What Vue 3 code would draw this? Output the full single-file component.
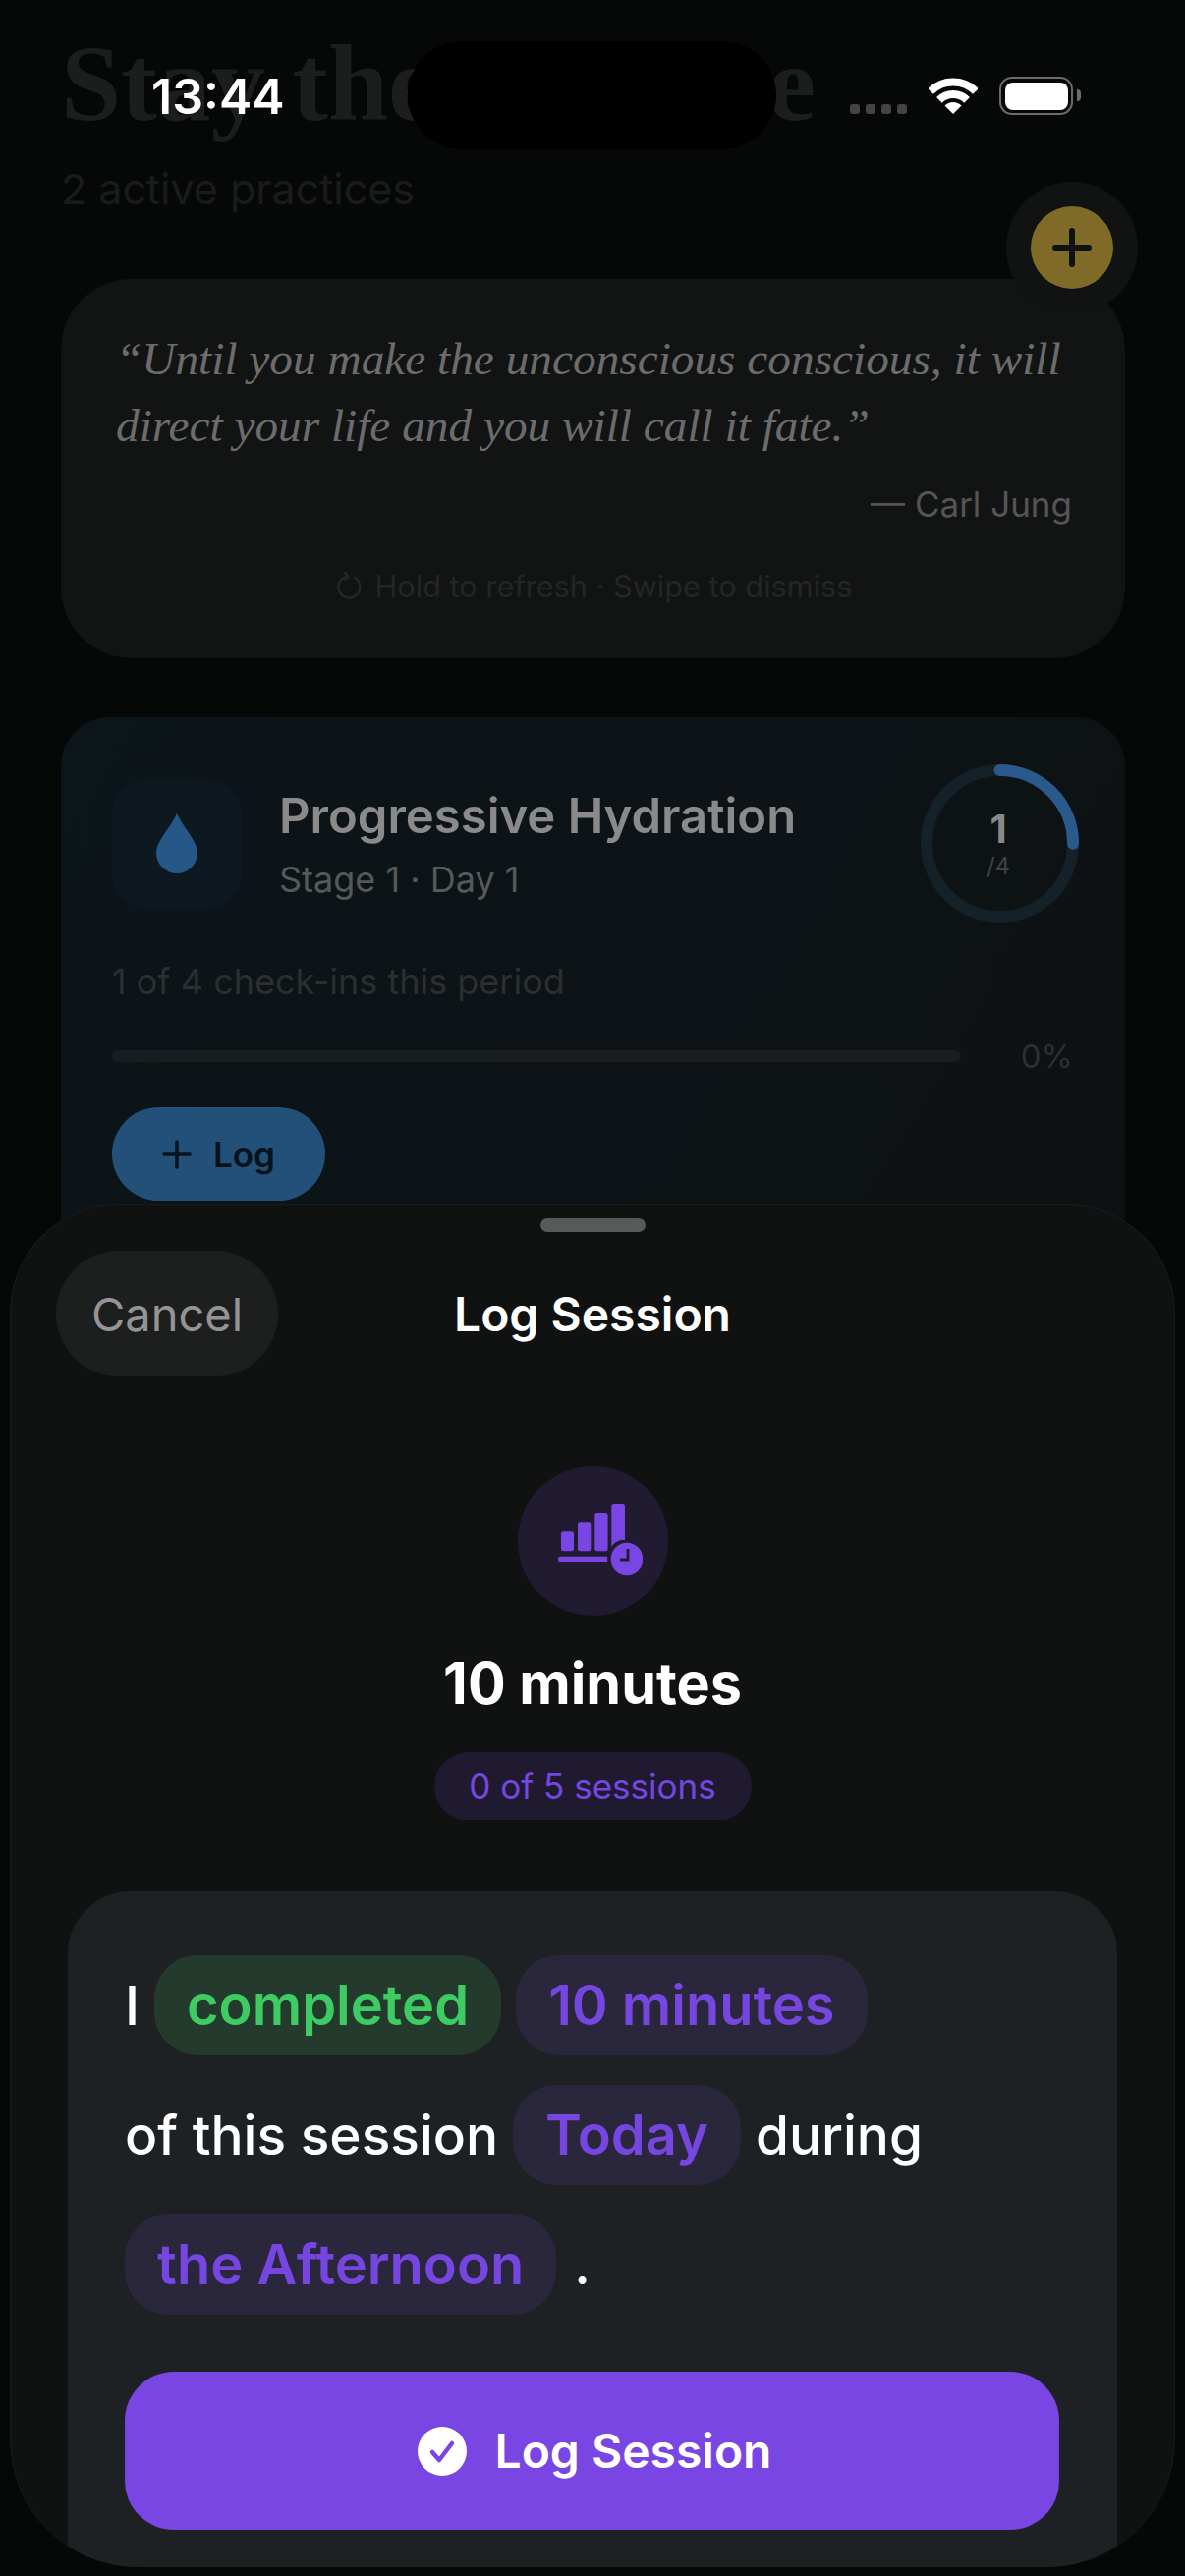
<template>
  <div class="screen">
    <main class="home">
      <h1 class="title">Stay the <span class="title-end">Course</span></h1>
      <p class="subtitle">{{ activeCount }} active practices</p>

      <section class="quote-card">
        <p class="quote">“Until you make the unconscious conscious, it will direct your life and you will call it fate.”</p>
        <p class="author">— Carl Jung</p>
        <p class="hint">
          <svg class="hint-icon" viewBox="0 0 26 30" width="26" height="30" fill="none" stroke="#242626" stroke-width="2.5" stroke-linecap="round">
            <path d="M19 6a11 11 0 1 1-9-1" />
            <path d="M9 1l4 4-4 3" />
          </svg>
          Hold to refresh · Swipe to dismiss
        </p>
      </section>

      <section class="habit-card">
        <div class="habit-head">
          <div class="habit-tile">
            <svg viewBox="0 0 42 61" width="42" height="61"><path d="M21 0C27 14 42 28 42 40A21 21 0 0 1 0 40C0 28 15 14 21 0Z" fill="#255887" /></svg>
          </div>
          <div class="habit-names">
            <div class="habit-name">Progressive Hydration</div>
            <div class="habit-stage">Stage 1 · Day 1</div>
          </div>
          <div class="ring">
            <svg viewBox="0 0 161 161" width="161" height="161">
              <circle cx="80.5" cy="80.5" r="74.5" fill="none" stroke="#152129" stroke-width="12" />
              <circle cx="80.5" cy="80.5" r="74.5" fill="none" stroke="#2a5a8c" stroke-width="12" stroke-linecap="round" stroke-dasharray="117 468" transform="rotate(-90 80.5 80.5)" />
            </svg>
            <div class="ring-text">
              <span class="ring-num">1</span>
              <span class="ring-total">/4</span>
            </div>
          </div>
        </div>
        <p class="checkins">1 of 4 check-ins this period</p>
        <div class="progress-row">
          <div class="progress-track"></div>
          <span class="progress-pct">0%</span>
        </div>
        <button class="log-btn">
          <svg viewBox="0 0 30 30" width="30" height="30"><path d="M15 2v26M2 15h26" stroke="#08131d" stroke-width="3.6" stroke-linecap="round" /></svg>
          Log
        </button>
      </section>
    </main>

    <div class="fab-ring">
      <div class="fab">
        <svg viewBox="0 0 40 40" width="40" height="40"><path d="M20 3v34M3 20h34" stroke="#101210" stroke-width="6" stroke-linecap="round" /></svg>
      </div>
    </div>

    <div class="status">
      <span class="clock">13:44</span>
      <div class="island"></div>
      <div class="status-icons">
        <div class="dots"><i v-for="n in 4" :key="n"></i></div>
        <svg class="wifi" viewBox="0 0 50 37" width="50" height="37" fill="none" stroke="#fff" stroke-width="8">
          <path d="M2 14A32.5 32.5 0 0 1 48 14" />
          <path d="M10.9 22.9A20 20 0 0 1 39.1 22.9" />
          <path d="M25 37L16.5 28.5A12 12 0 0 1 33.5 28.5Z" fill="#fff" stroke="none" />
        </svg>
        <div class="battery"><div class="battery-fill"></div></div>
      </div>
    </div>

    <section class="sheet">
      <div class="handle"></div>
      <header class="sheet-head">
        <button class="cancel">Cancel</button>
        <h2 class="sheet-title">Log Session</h2>
      </header>

      <div class="session">
        <div class="session-icon">
          <svg viewBox="-16 0 102 76" width="102" height="76">
            <g fill="#7946e3">
              <rect x="3" y="27.3" width="13" height="21" rx="2.5" />
              <rect x="20" y="18.3" width="13.3" height="30" rx="2.5" />
              <rect x="37.3" y="9" width="13.3" height="39.3" rx="2.5" />
              <rect x="54.3" y="0" width="13.7" height="48" rx="2.5" />
              <rect x="0" y="53.7" width="52" height="5.3" rx="2.6" />
            </g>
            <circle cx="70" cy="56" r="20" fill="#211b32" />
            <circle cx="70" cy="56" r="16.3" fill="#7946e3" />
            <path d="M71 46V57H63" fill="none" stroke="#211b32" stroke-width="2.8" />
          </svg>
        </div>
        <div class="session-name">10 minutes</div>
        <div class="session-count">0 of 5 sessions</div>
      </div>

      <div class="sentence-card">
        <div class="sentence">
          <div class="sentence-line">
            <span>I</span>
            <span class="chip chip-green">completed</span>
            <span class="chip">10 minutes</span>
          </div>
          <div class="sentence-line">
            <span>of this session</span>
            <span class="chip">Today</span>
            <span>during</span>
          </div>
          <div class="sentence-line">
            <span class="chip">the Afternoon</span>
            <span class="stop">.</span>
          </div>
        </div>
        <button class="submit">
          <svg viewBox="0 0 50 50" width="50" height="50">
            <circle cx="25" cy="25" r="25" fill="#fff" />
            <path d="M15 26l7 8 13-17" fill="none" stroke="#7946e3" stroke-width="4.5" stroke-linecap="round" stroke-linejoin="round" />
          </svg>
          Log Session
        </button>
      </div>
    </section>
  </div>
</template>

<script setup>
const activeCount = 2
</script>

<style scoped>
.screen {
  position: relative;
  width: 1206px;
  height: 2622px;
  overflow: hidden;
  background: #060808;
  font-family: Inter, "Noto Sans", sans-serif;
}
.home {
  padding: 23px 61px 0 62px;
}
.title {
  margin: 0;
  font: 700 110px/124px "Liberation Serif", serif;
  color: #1c1d1d;
  white-space: nowrap;
}
.title-end {
  letter-spacing: 4.5px;
}
.subtitle {
  margin: 19px 0 0;
  font-size: 43px;
  line-height: 52px;
  color: #1a1b1c;
}
.quote-card {
  margin-top: 66px;
  height: 386px;
  box-sizing: border-box;
  padding: 47px 54px 0 56px;
  border-radius: 72px;
  background: #121414;
}
.quote {
  margin: 0;
  font: italic 400 47.3px/68px "Liberation Serif", serif;
  color: #6c6c6c;
}
.author {
  margin: 24px 0 0;
  text-align: right;
  font-size: 35px;
  line-height: 44px;
  color: #555;
}
.hint {
  margin: 42px 0 0;
  display: flex;
  justify-content: center;
  align-items: center;
  gap: 14px;
  font-size: 30.7px;
  line-height: 40px;
  color: #242626;
}
.habit-card {
  margin-top: 60px;
  height: 700px;
  box-sizing: border-box;
  padding: 48px 53px 0 52px;
  border-radius: 50px;
  background: linear-gradient(120deg, #0c151a, #0e1113);
}
.habit-head {
  display: flex;
  align-items: center;
}
.habit-tile {
  width: 132px;
  height: 132px;
  flex: none;
  display: flex;
  align-items: center;
  justify-content: center;
  border-radius: 36px;
  background: #0d1821;
}
.habit-names {
  flex: 1;
  margin-left: 38px;
}
.habit-name {
  font-size: 49px;
  line-height: 60px;
  font-weight: 600;
  color: #8a8a8a;
}
.habit-stage {
  margin-top: 12px;
  font-size: 36px;
  line-height: 44px;
  color: #565859;
}
.ring {
  position: relative;
  width: 161px;
  height: 161px;
  flex: none;
  margin-right: -6px;
}
.ring-text {
  position: absolute;
  inset: 0 3px 0 0;
  display: flex;
  flex-direction: column;
  align-items: center;
  justify-content: center;
}
.ring-num {
  font-size: 40px;
  line-height: 46px;
  font-weight: 700;
  color: #878888;
}
.ring-total {
  font-size: 24px;
  line-height: 30px;
  color: #3f4243;
}
.checkins {
  margin: 38px 0 0;
  font-size: 36px;
  line-height: 44px;
  color: #2c2e2f;
}
.progress-row {
  display: flex;
  align-items: center;
  justify-content: space-between;
  margin-top: 34px;
}
.progress-track {
  width: 864px;
  height: 12px;
  border-radius: 6px;
  background: #191d1f;
}
.progress-pct {
  font-size: 33px;
  line-height: 40px;
  color: #2c2f30;
}
.log-btn {
  margin-top: 32px;
  width: 217px;
  height: 95px;
  display: flex;
  align-items: center;
  justify-content: center;
  gap: 22px;
  padding: 0;
  border: 0;
  border-radius: 48px;
  background: #225079;
  font: 600 35px Inter, sans-serif;
  color: #08131d;
}
.fab-ring {
  position: absolute;
  left: 1024px;
  top: 185px;
  width: 134px;
  height: 134px;
  display: flex;
  align-items: center;
  justify-content: center;
  border-radius: 50%;
  background: #111313;
}
.fab {
  width: 84px;
  height: 84px;
  display: flex;
  align-items: center;
  justify-content: center;
  border-radius: 50%;
  background: #7f6a28;
}
.status {
  position: absolute;
  inset: 0 0 auto 0;
  height: 160px;
}
.clock {
  position: absolute;
  left: 154px;
  top: 68px;
  font-size: 50px;
  line-height: 60px;
  font-weight: 600;
  color: #fff;
}
.island {
  position: absolute;
  left: 415px;
  top: 42px;
  width: 375px;
  height: 110px;
  border-radius: 55px;
  background: #000;
}
.status-icons {
  position: absolute;
  left: 865px;
  top: 78px;
  display: flex;
  align-items: flex-start;
}
.dots {
  display: flex;
  gap: 6px;
  margin-top: 28px;
}
.dots i {
  width: 10px;
  height: 10px;
  border-radius: 3px;
  background: #444;
}
.wifi {
  margin-left: 22px;
  margin-top: 1px;
}
.battery {
  position: relative;
  width: 75px;
  height: 39px;
  box-sizing: border-box;
  margin-left: 22px;
  padding: 3.5px;
  border: 2.5px solid #6c6c6c;
  border-radius: 13px;
}
.battery::after {
  content: "";
  position: absolute;
  right: -10px;
  top: 11px;
  width: 4px;
  height: 12px;
  border-radius: 0 4px 4px 0;
  background: #6c6c6c;
}
.battery-fill {
  width: 100%;
  height: 100%;
  border-radius: 8px;
  background: #fff;
}
.sheet {
  position: absolute;
  left: 10px;
  right: 10px;
  top: 1226px;
  bottom: 9px;
  overflow: hidden;
  box-sizing: border-box;
  border: 1px solid #1a1c1c;
  border-bottom: 0;
  border-radius: 110px 110px 130px 130px;
  background: #101212;
}
.handle {
  width: 107px;
  height: 14px;
  margin: 13px auto 0;
  border-radius: 7px;
  background: #58595b;
}
.sheet-head {
  position: relative;
  height: 128px;
  margin-top: 19px;
  display: flex;
  align-items: center;
  justify-content: center;
}
.cancel {
  position: absolute;
  left: 46px;
  top: 0;
  width: 226px;
  height: 128px;
  padding: 0;
  border: 0;
  border-radius: 64px;
  background: #1d1e1e;
  font: 400 47px Inter, sans-serif;
  color: #949496;
}
.sheet-title {
  margin: 0;
  font-size: 48px;
  font-weight: 600;
  color: #fff;
}
.session {
  display: flex;
  flex-direction: column;
  align-items: center;
  margin-top: 91px;
}
.session-icon {
  width: 153px;
  height: 153px;
  display: flex;
  align-items: center;
  justify-content: center;
  border-radius: 50%;
  background: #211b32;
}
.session-name {
  margin-top: 30px;
  font-size: 57.5px;
  line-height: 76px;
  font-weight: 700;
  color: #fff;
}
.session-count {
  margin-top: 32px;
  width: 323px;
  height: 70px;
  display: flex;
  align-items: center;
  justify-content: center;
  border-radius: 35px;
  background: #1f1a30;
  font-size: 35px;
  color: #7546e0;
}
.sentence-card {
  margin: 72px 58px 0;
  height: 800px;
  box-sizing: border-box;
  padding: 65px 58px 0;
  border-radius: 64px;
  background: #1d2123;
}
.sentence {
  display: flex;
  flex-direction: column;
  gap: 30px;
}
.sentence-line {
  display: flex;
  align-items: center;
  gap: 15px;
  font-size: 55px;
  font-weight: 500;
  line-height: 102px;
  color: #fff;
}
.chip {
  padding: 0 33px;
  border-radius: 44px;
  background: #2a263b;
  font-size: 56px;
  font-weight: 600;
  color: #7546e0;
}
.chip-green {
  background: #243a2c;
  color: #3ecb64;
}
.stop {
  margin-left: 3px;
}
.submit {
  width: 951px;
  height: 161px;
  margin-top: 58px;
  display: flex;
  align-items: center;
  justify-content: center;
  gap: 29px;
  padding: 0 0 0 5px;
  border: 0;
  border-radius: 50px;
  background: #7946e3;
  font: 600 48px Inter, sans-serif;
  color: #fff;
}
</style>

<style>
body {
  background: #060808;
}
</style>
